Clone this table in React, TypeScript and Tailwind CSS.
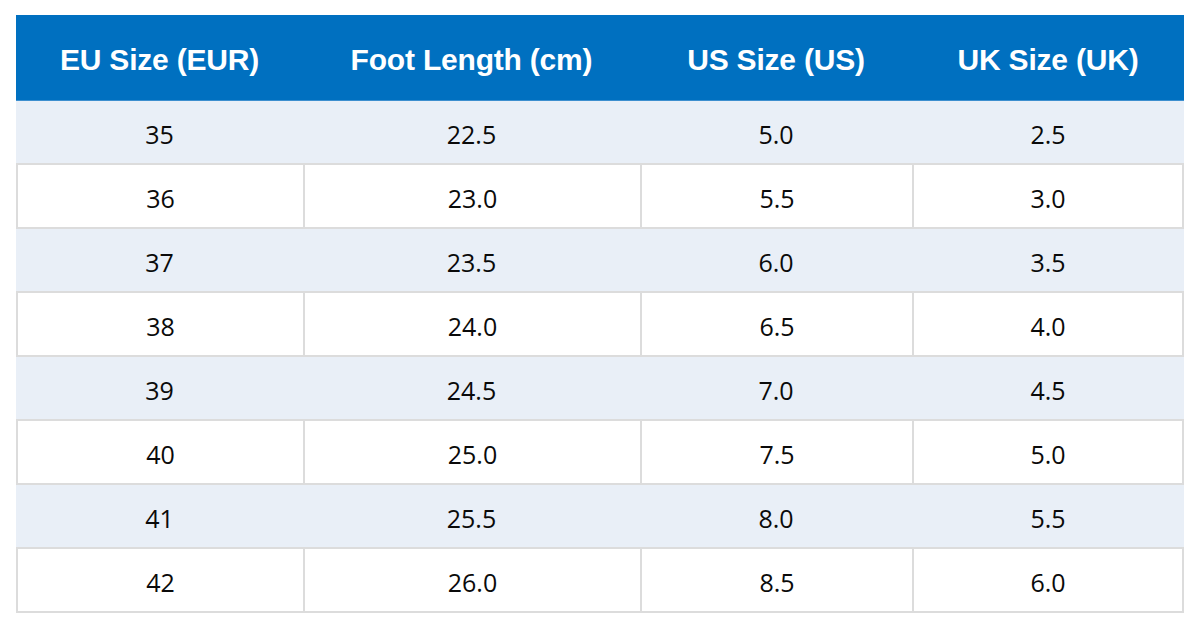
const rows = [
  ["35", "22.5", "5.0", "2.5"],
  ["36", "23.0", "5.5", "3.0"],
  ["37", "23.5", "6.0", "3.5"],
  ["38", "24.0", "6.5", "4.0"],
  ["39", "24.5", "7.0", "4.5"],
  ["40", "25.0", "7.5", "5.0"],
  ["41", "25.5", "8.0", "5.5"],
  ["42", "26.0", "8.5", "6.0"],
];

const headers = ["EU Size (EUR)", "Foot Length (cm)", "US Size (US)", "UK Size (UK)"];

export default function App() {
  return (
    <div className="w-[1200px] h-[630px] bg-white pt-[15px] pl-4">
      <div className="w-[1168px]">
        {/* Header */}
        <div className="grid grid-cols-[287px_337px_272px_272px] h-[86px] bg-[#0070c0] border-b border-[#3d8fcf]">
          {headers.map((h) => (
            <div
              key={h}
              className="flex items-center justify-center pt-[3px] text-white font-bold text-[30px] tracking-[-0.2px] font-['Liberation_Sans',Arial,sans-serif]"
            >
              {h}
            </div>
          ))}
        </div>

        {/* Body */}
        {rows.map((r, i) => {
          const shaded = i % 2 === 0;
          return (
            <div
              key={r[0]}
              className={
                shaded
                  ? "grid grid-cols-[287px_337px_272px_272px] h-[64px] bg-[#e9eff7] border-b-2 border-[#dcdcdc]"
                  : "grid grid-cols-[287px_337px_272px_272px] h-[64px] bg-white border-b-2 border-[#dcdcdc]"
              }
            >
              {r.map((c, j) => (
                <div
                  key={j}
                  className={
                    (shaded ? "" : j === 3 ? "border-x-2 border-[#dcdcdc] " : "border-l-2 border-[#dcdcdc] ") +
                    "flex items-center justify-center pt-[6px] text-[#0a0a0a] text-[25px] font-['Open_Sans','Noto_Sans',sans-serif]"
                  }
                >
                  {c}
                </div>
              ))}
            </div>
          );
        })}
      </div>
    </div>
  );
}
